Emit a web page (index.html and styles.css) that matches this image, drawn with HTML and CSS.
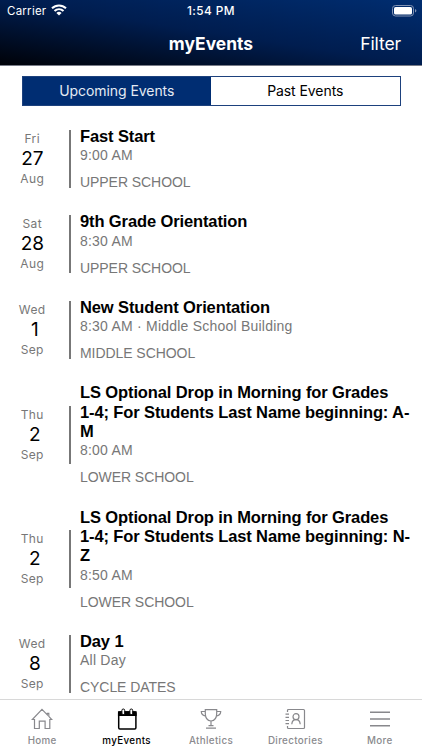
FILE: index.html
```html
<!DOCTYPE html>
<html lang="en">
<head>
<meta charset="utf-8">
<title>myEvents</title>
<link rel="stylesheet" href="styles.css">
</head>
<body>
<div class="app">
  <header class="header">
    <div class="status">
      <div class="carrier"><span>Carrier</span>
        <svg width="16" height="12" viewBox="0 0 16 12" fill="none" stroke="#fff" stroke-width="2"><path d="M1 4.300C5 .4 11 .4 15 4.300M3.500 7C6.100 4.500 9.900 4.500 12.500 7"/><path d="M8 11.500L5.400 8.900Q8 6.800 10.600 8.900Z" fill="#fff" stroke="none"/></svg>
      </div>
      <span class="clock">1:54 PM</span>
      <svg class="battery" width="25" height="12" viewBox="0 0 25 12"><rect x=".5" y=".5" width="21" height="10.500" rx="3" fill="none" stroke="#8192b3"/><rect x="2" y="2" width="18" height="7.500" rx="1.600" fill="#fff"/><path d="M23 4v3.500q1.400-.5 1.400-1.750T23 4" fill="#8192b3"/></svg>
    </div>
    <div class="nav">
      <h1 class="title">myEvents</h1>
      <span class="filter">Filter</span>
    </div>
  </header>
  <div class="tabs">
    <div class="tab active"><span>Upcoming Events</span></div>
    <div class="tab"><span>Past Events</span></div>
  </div>
  <main class="events">
    <article class="event">
      <div class="date"><span>Fri</span><b>27</b><span>Aug</span></div>
      <div class="info"><h2>Fast Start</h2><p class="time">9:00 AM</p><p class="cat">UPPER SCHOOL</p></div>
    </article>
    <article class="event">
      <div class="date"><span>Sat</span><b>28</b><span>Aug</span></div>
      <div class="info"><h2>9th Grade Orientation</h2><p class="time">8:30 AM</p><p class="cat">UPPER SCHOOL</p></div>
    </article>
    <article class="event">
      <div class="date"><span>Wed</span><b class="single">1</b><span>Sep</span></div>
      <div class="info"><h2>New Student Orientation</h2><p class="time">8:30 AM · Middle School Building</p><p class="cat">MIDDLE SCHOOL</p></div>
    </article>
    <article class="event">
      <div class="date"><span>Thu</span><b class="single">2</b><span>Sep</span></div>
      <div class="info"><h2>LS Optional Drop in Morning for Grades<br>1-4; For Students Last Name beginning: A-<br>M</h2><p class="time">8:00 AM</p><p class="cat">LOWER SCHOOL</p></div>
    </article>
    <article class="event">
      <div class="date"><span>Thu</span><b class="single">2</b><span>Sep</span></div>
      <div class="info"><h2>LS Optional Drop in Morning for Grades<br>1-4; For Students Last Name beginning: N-<br>Z</h2><p class="time">8:50 AM</p><p class="cat">LOWER SCHOOL</p></div>
    </article>
    <article class="event">
      <div class="date"><span>Wed</span><b class="single">8</b><span>Sep</span></div>
      <div class="info"><h2>Day 1</h2><p class="time">All Day</p><p class="cat">CYCLE DATES</p></div>
    </article>
  </main>
  <nav class="tabbar">
    <div class="item">
      <svg width="22" height="22" viewBox="0 0 22 22"><path d="M11 1.300L16.300 6.800V5.300h1.500v3L20.700 11.500h-1.900v9h-4.700v-7.300H8.300v7.300H3.500v-9H1.300Z"/></svg>
      <span>Home</span>
    </div>
    <div class="item on">
      <svg width="22" height="22" viewBox="0 0 22 22"><rect x="2.700" y="4" width="17.200" height="17" rx="1.200"/><path d="M2.700 4h17.200v3.200H2.700z" fill="#000"/><rect x="5.900" y="1" width="2.800" height="5.600" rx="1.400" fill="#fff" stroke-width="1"/><rect x="13.900" y="1" width="2.800" height="5.600" rx="1.400" fill="#fff" stroke-width="1"/></svg>
      <span>myEvents</span>
    </div>
    <div class="item">
      <svg width="22" height="22" viewBox="0 0 22 22"><path d="M5.300 1.700h11.400v3.800c0 4.500-2 7.200-5.700 7.500-3.700-.3-5.700-3-5.700-7.500zM5.300 3.500H1.300c0 2.500 1.500 4 4.500 4.700M16.700 3.500h4c0 2.500-1.500 4-4.500 4.700M11 13v4.700M8.500 17.700h5M6 20.200h10"/></svg>
      <span>Athletics</span>
    </div>
    <div class="item">
      <svg width="22" height="22" viewBox="0 0 22 22"><path d="M3.500 4V2.500q0-1 1-1h15q1 0 1 1v17q0 1-1 1h-15q-1 0-1-1V18M1.500 6.200h3.500M1.500 9.300h3.500M1.500 12.500h3.500M1.500 15.700h3.500M7.800 16.200c.2-2.500 1.700-4.500 4.200-4.500s4 2 4.200 4.500"/><circle cx="12" cy="8.700" r="3"/></svg>
      <span>Directories</span>
    </div>
    <div class="item">
      <svg width="22" height="22" viewBox="0 0 22 22"><path d="M1 4.200h20M1 11h20M1 17.800h20" stroke-width="1.500"/></svg>
      <span>More</span>
    </div>
  </nav>
</div>
</body>
</html>
```
FILE: styles.css
```css
* { box-sizing: border-box; margin: 0; padding: 0; }
body { width: 422px; height: 750px; overflow: hidden; background: #fff; font-family: Inter, sans-serif; color: #000; }
.app { display: flex; flex-direction: column; height: 750px; }
.header { flex: none; height: 66px; border-bottom: 1px solid #777b87; color: #fff; background: linear-gradient(to top right, #000208 0%, #001d4f 50%, #002d70 100%); }
.status { display: grid; grid-template-columns: 1fr auto 1fr; align-items: center; height: 22px; padding: 0 5px 0 7px; font-size: 11.500px; }
.carrier { display: flex; align-items: center; gap: 5px; letter-spacing: .25px; }
.carrier svg { margin-top: -2px; }
.clock { font-size: 11.800px; font-weight: 500; letter-spacing: .45px; margin-right: 2px; }
.battery { justify-self: end; margin-top: -1px; }
.nav { display: grid; grid-template-columns: 1fr auto 1fr; align-items: center; height: 43px; padding: 0 21px; }
.title { grid-column: 2; font-size: 17.400px; font-weight: 700; letter-spacing: .05px; line-height: 20px; }
.filter { justify-self: end; font-size: 17.600px; letter-spacing: -.15px; line-height: 20px; }
.tabs { flex: none; display: grid; grid-template-columns: 1fr 1fr; width: 379px; height: 30px; margin: 9.500px 0 0 21.500px; border: 1px solid #1d417d; font-size: 14px; letter-spacing: -.07px; }
.tab { display: flex; align-items: center; justify-content: center; }
.tab.active { background: #002d72; color: #e4eaf3; }
.events { flex: 1; min-height: 0; padding-top: 10.600px; overflow: hidden; }
.event { display: flex; align-items: center; padding: 10.600px 0; }
.date { flex: none; display: flex; flex-direction: column; align-items: center; justify-content: center; width: 71px; height: 58px; padding: 0 4.500px 0 0; border-right: 2px solid #777; color: #777; font-size: 12px; letter-spacing: .4px; line-height: 16px; }
.date b { font-size: 19px; font-weight: 400; line-height: 24px; color: #000; letter-spacing: -.2px; }
.date .single { padding-left: 5px; }
.info { padding-left: 9px; font-family: "Liberation Sans", sans-serif; color: #777; white-space: nowrap; }
.info h2 { font-size: 16.500px; line-height: 19.350px; font-weight: 700; letter-spacing: -.115px; color: #000; }
.time { font-size: 14px; letter-spacing: .22px; line-height: 18px; }
.cat { margin-top: 9px; font-size: 14px; letter-spacing: -.06px; line-height: 18px; }
.tabbar { flex: none; display: grid; grid-template-columns: repeat(5, 1fr); height: 51px; border-top: 1px solid #d8d8d8; background: #fff; }
.item { display: flex; flex-direction: column; align-items: center; padding-top: 8px; font-size: 9.800px; font-weight: 500; letter-spacing: .35px; line-height: 12px; color: #8a8a8e; }
.item svg { fill: none; stroke: #88888c; stroke-width: 1.200; margin-bottom: 5px; }
.item.on { color: #000; }
.item.on svg { stroke: #000; stroke-width: 1.500; }
```
